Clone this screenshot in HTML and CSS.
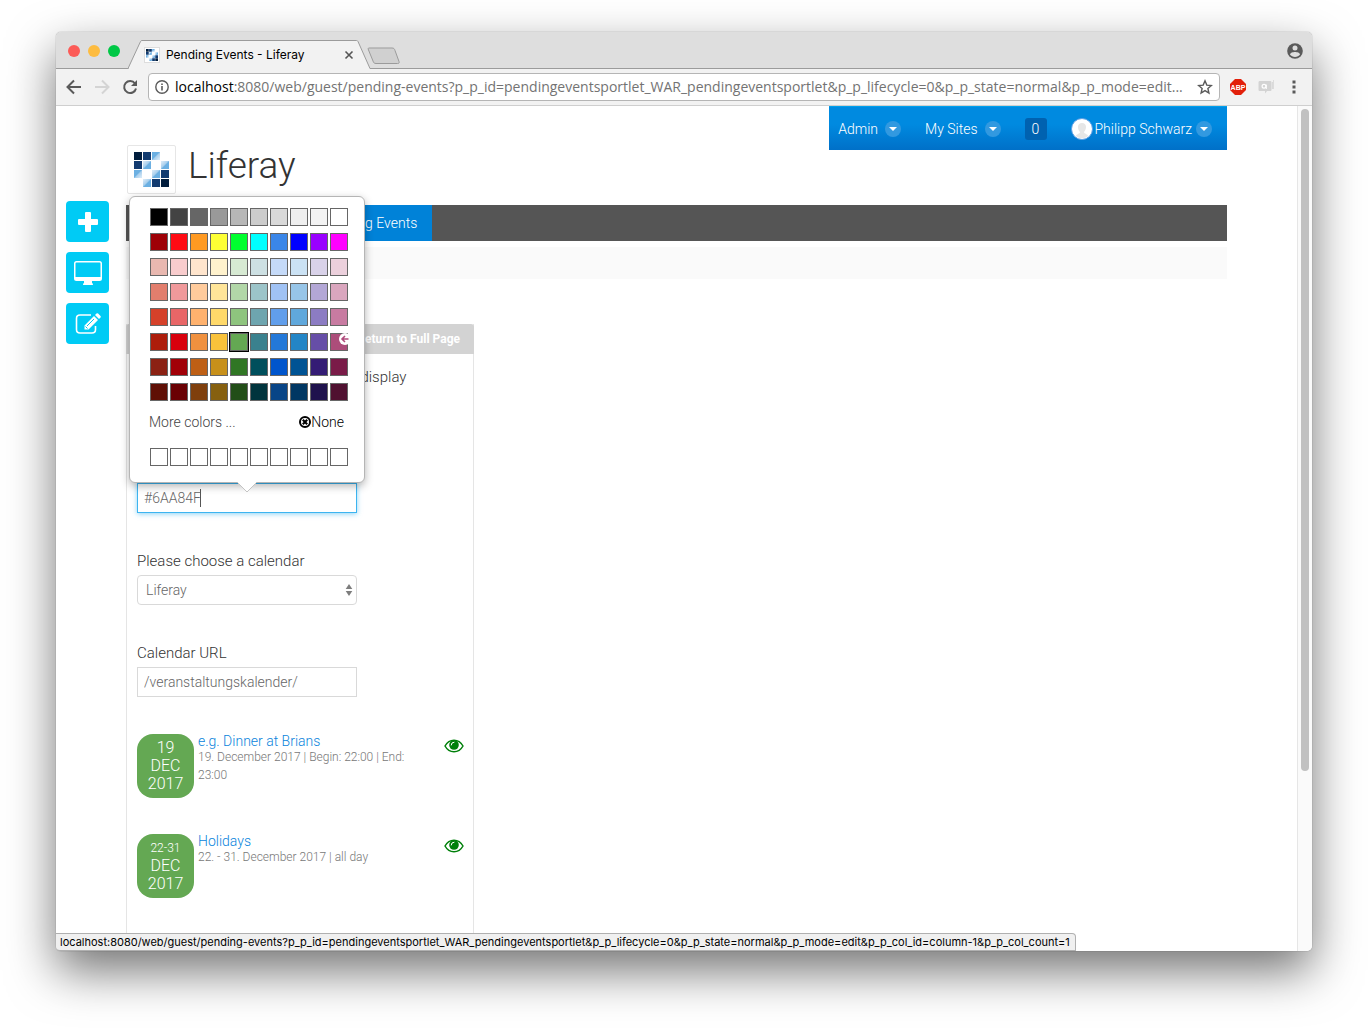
FILE: index.html
```html
<!DOCTYPE html>
<html lang="en">
<head>
<meta charset="utf-8">
<title>Pending Events - Liferay</title>
<link rel="stylesheet" href="styles.css">
</head>
<body>
<svg class="defs" aria-hidden="true">
  <defs>
    <linearGradient id="shine-start" x1="0" y1="0" x2="1" y2="1">
      <stop offset="0.1" stop-color="#d4e7f6"/><stop offset="0.48" stop-color="#a5cdec"/><stop offset="0.52" stop-color="#6cb0e2"/>
    </linearGradient>
    <linearGradient id="shine-end" x1="1" y1="1" x2="0" y2="0">
      <stop offset="0.1" stop-color="#d4e7f6"/><stop offset="0.48" stop-color="#a5cdec"/><stop offset="0.52" stop-color="#6cb0e2"/>
    </linearGradient>
    <symbol id="logo" viewBox="0 0 35 35">
      <path fill="#001d3d" d="M0 0h8v8H0zM27 27h8v8h-8z"/>
      <path fill="#123b70" d="M9 0h8v8H9zM0 9h8v8H0zM27 18h8v8h-8zM18 27h8v8h-8z"/>
      <rect x="18" width="8" height="8" fill="url(#shine-end)"/>
      <rect x="9" y="9" width="8" height="8" fill="url(#shine-start)"/>
      <rect x="27" y="9" width="8" height="8" fill="url(#shine-start)"/>
      <rect y="18" width="8" height="8" fill="url(#shine-end)"/>
      <rect x="18" y="18" width="8" height="8" fill="url(#shine-start)"/>
      <rect x="9" y="27" width="8" height="8" fill="url(#shine-start)"/>
    </symbol>
    <symbol id="eye" viewBox="0 0 20 14">
      <path fill="none" stroke="#00800a" stroke-width="1.5" d="M1 7C3 3.400 6.300 1.200 10 1.200S17 3.400 19 7C17 10.600 13.700 12.800 10 12.800S3 10.600 1 7z"/>
      <circle cx="10" cy="6" r="4.800" fill="#00800a"/>
      <path fill="none" stroke="#fff" stroke-width="1" stroke-linecap="round" d="M7.200 6A2.800 2.800 0 0 1 10 3.200"/>
    </symbol>
  </defs>
</svg>
<div class="window">
  <header class="tabstrip">
    <div class="lights">
      <button class="light light-close" aria-label="Close"></button>
      <button class="light light-min" aria-label="Minimize"></button>
      <button class="light light-max" aria-label="Zoom"></button>
    </div>
    <div class="tab">
      <svg class="tab-shape" viewBox="0 0 244 29" aria-hidden="true"><path fill="#f2f2f2" stroke="#9b9b9b" d="M0 28.500L12.500 1.500Q13 .5 14 .5H228.500Q229.500 .5 230 1.500L242 28.500"/><path stroke="#f2f2f2" d="M1 28.500H241.500"/></svg>
      <div class="tab-body">
        <span class="favicon"><svg width="12" height="12"><use href="#logo"/></svg></span>
        <span class="tab-title">Pending Events - Liferay</span>
        <button class="plain" aria-label="Close tab"><svg width="10" height="10" viewBox="0 0 10 10"><path stroke="#555" stroke-width="1.600" d="M1.500 1.500l7 7M8.500 1.500l-7 7"/></svg></button>
      </div>
    </div>
    <button class="plain new-tab" aria-label="New tab"><svg width="36" height="18" viewBox="0 0 36 18"><path fill="#d0d0d0" stroke="#9b9b9b" d="M3 1h23c2 0 2.500 1 3 2.500l4 11c.5 1.500 0 2-1.500 2H10c-2 0-2.500-1-3-2.500l-4.500-11C2 1.500 2 1 3 1z"/></svg></button>
    <button class="plain profile" aria-label="Profile"><svg width="16" height="16" viewBox="0 0 16 16"><circle cx="8" cy="8" r="7.800" fill="#5a5a5a"/><circle cx="8" cy="5" r="2.500" fill="#dedede"/><path fill="#dedede" d="M3 11.500C3 9.800 6 9 8 9s5 .8 5 2.500C12 13 10 14 8 14s-4-1-5-2.500z"/></svg></button>
  </header>
  <div class="toolbar">
    <button class="plain" aria-label="Back"><svg width="16" height="16" viewBox="0 0 16 16"><path fill="none" stroke="#5a5a5a" stroke-width="2" d="M15 8H2M8 1.500L1.500 8 8 14.500"/></svg></button>
    <button class="plain" aria-label="Forward"><svg width="16" height="16" viewBox="0 0 16 16"><path fill="none" stroke="#d4d4d4" stroke-width="2" d="M1 8h13M8 1.500L14.500 8 8 14.500"/></svg></button>
    <button class="plain" aria-label="Reload"><svg width="16" height="16" viewBox="0 0 16 16"><path fill="none" stroke="#5a5a5a" stroke-width="2" d="M13 4.500A6 6 0 1 0 14 9.500"/><path fill="#5a5a5a" d="M15 1v6H9z"/></svg></button>
    <div class="omnibox">
      <svg width="14" height="14" viewBox="0 0 14 14"><circle cx="7" cy="7" r="6.200" fill="none" stroke="#5a5a5a" stroke-width="1.400"/><path fill="#5a5a5a" d="M6.200 6h1.600v4.500H6.200zM6.200 3.400h1.600V5H6.200z"/></svg>
      <span class="url"><b>localhost</b>:8080/web/guest/pending-events?p_p_id=pendingeventsportlet_WAR_pendingeventsportlet&amp;p_p_lifecycle=0&amp;p_p_state=normal&amp;p_p_mode=edit...</span>
      <button class="plain" aria-label="Bookmark"><svg width="16" height="16" viewBox="0 0 16 16"><path fill="none" stroke="#5a5a5a" stroke-width="1.400" d="M8 1.800l1.800 4.300 4.600.4-3.500 3 1 4.500L8 11.600 4.100 14l1-4.500-3.500-3 4.600-.4z"/></svg></button>
    </div>
    <button class="plain" aria-label="Adblock Plus"><svg width="16" height="16" viewBox="0 0 16 16"><path fill="#e2200b" d="M5 0h6l5 5v6l-5 5H5l-5-5V5z"/><text x="8" y="11" text-anchor="middle" class="abp-text">ABP</text></svg></button>
    <button class="plain" aria-label="Extension"><svg width="16" height="14" viewBox="0 0 16 14"><path fill="#d3d3d3" d="M2 1h10c1 0 1.500.5 1.500 1.500v7c0 1-.5 1.500-1.500 1.500H9l-2 2.500V11H2C1 11 .5 10.500.5 9.500v-7C.5 1.500 1 1 2 1zM14 2h.8v7H14zM15.300 0h.7v9h-.7z"/><circle cx="6" cy="6.300" r="1.900" fill="none" stroke="#fff" stroke-width="1.200"/><path stroke="#fff" d="M8.300 4.500v4.500"/></svg></button>
    <button class="plain menu" aria-label="Menu"><svg width="4" height="14" viewBox="0 0 4 14"><path fill="#5a5a5a" d="M.5.500h3v3h-3zM.5 5.500h3v3h-3zM.5 10.500h3v3h-3z"/></svg></button>
  </div>
  <div class="viewport">
    <aside class="rail">
      <button class="rail-btn" aria-label="Add"><svg width="20" height="20" viewBox="0 0 20 20"><path fill="#fff" d="M8 0h4q1 0 1 1v6h6q1 0 1 1v4q0 1-1 1h-6v6q0 1-1 1H8q-1 0-1-1v-6H1q-1 0-1-1V8q0-1 1-1h6V1q0-1 1-1z"/></svg></button>
      <button class="rail-btn" aria-label="Preview"><svg width="28" height="24" viewBox="0 0 28 24"><path fill="#fff" fill-rule="evenodd" d="M2.500 0h23Q28 0 28 2.500v15q0 2.500-2.500 2.500H18v2q1 0 1 2H9q0-2 1-2v-2H2.500Q0 20 0 17.500v-15Q0 0 2.500 0zm0 1.500q-1 0-1 1V16h25V2.500q0-1-1-1z"/></svg></button>
      <button class="rail-btn" aria-label="Edit"><svg width="26" height="22" viewBox="0 0 26 22"><path fill="none" stroke="#fff" stroke-width="1.600" d="M16 2H5Q1.500 2 1.500 5.500v11Q1.500 20 5 20h12q3.500 0 3.500-3.500V13"/><path fill="#fff" d="M19 3l4 4-9.500 9.500H9.500v-4zM20 2l1.500-1.500q.8-.7 1.600 0L25.500 3q.7.800 0 1.600L24 6z"/><path stroke="#00cbf5" d="M12 13l7-7M10.500 13.500l2 2"/></svg></button>
    </aside>
    <main class="page">
      <nav class="dockbar" aria-label="Dockbar">
        <button class="dock-item">Admin <span class="caret"></span></button>
        <button class="dock-item dock-sites">My Sites <span class="caret"></span></button>
        <button class="dock-count">0</button>
        <button class="dock-item dock-user"><svg width="22" height="22" viewBox="0 0 22 22"><circle cx="11" cy="11" r="10.500" fill="#fff" stroke="#5e9fe4"/><path fill="#e6e6e6" d="M5 18c0-2 4-2 4-4-3-3-3-9 2-9s5 6 2 9c0 2 4 2 4 4-3 3-9 3-12 0z"/></svg>Philipp Schwarz <span class="caret"></span></button>
      </nav>
      <div class="banner">
        <a class="logo" href="#" aria-label="Home"><svg width="35" height="35"><use href="#logo"/></svg></a>
        <h1>Liferay</h1>
      </div>
      <nav class="navbar" aria-label="Site pages"><a class="nav-first" href="#">Welcome</a><a class="nav-active" href="#">Pending Events</a></nav>
      <div class="crumbs"></div>
      <section class="portlet">
        <div class="portlet-top">
          <a href="#"><svg class="back-icon" width="12" height="12" viewBox="0 0 12 12"><circle cx="6" cy="6" r="6" fill="#fff"/><path stroke="#b04a7b" stroke-width="1.600" fill="none" d="M9.500 6H3.500M6 3L3 6l3 3"/></svg>Return to Full Page</a>
        </div>
        <form class="portlet-form">
          <div class="field"><label for="count">Maximum number of meetings to display</label><input id="count" type="text" value="5"></div>
          <div class="field"><label for="color">Background color</label>
            <div class="color-anchor">
              <input id="color" class="focused" type="text" value="#6AA84F"><span class="cursor"></span>
              <div class="popover">
                <div class="palette" id="palette"></div>
                <div class="pop-actions"><a href="#">More colors ...</a><button type="button" class="none"><svg width="12" height="12" viewBox="0 0 12 12"><circle cx="6" cy="6" r="5" fill="none" stroke="#000" stroke-width="2"/><path stroke="#000" stroke-width="2.200" d="M3.800 3.800l4.400 4.400M8.200 3.800L3.800 8.200"/></svg>None</button></div>
                <div class="palette" id="recent"></div>
                <svg class="arrow" width="20" height="11" viewBox="0 0 20 11"><path fill="#fff" stroke="#c4c4c4" d="M0 0l10 10L20 0"/><path fill="#fff" d="M1 0h18v1H1z"/></svg>
              </div>
            </div>
          </div>
          <div class="field"><label for="calendar">Please choose a calendar</label>
            <div class="select-wrap"><select id="calendar"><option>Liferay</option></select><svg width="8" height="14" viewBox="0 0 8 14"><path fill="#7d7d7d" d="M4 1l3.300 5H.7zM4 13L.7 8h6.600z"/></svg></div>
          </div>
          <div class="field"><label for="url">Calendar URL</label><input id="url" type="text" value="/veranstaltungskalender/"></div>
        </form>
        <article class="event">
          <div class="badge"><span>19</span><span>DEC</span><span>2017</span></div>
          <div class="event-text"><a href="#">e.g. Dinner at Brians</a><p>19. December 2017 | Begin: 22:00 | End: 23:00</p></div>
          <svg class="eye" width="20" height="14"><use href="#eye"/></svg>
        </article>
        <article class="event">
          <div class="badge"><span class="range">22-31</span><span>DEC</span><span>2017</span></div>
          <div class="event-text"><a href="#">Holidays</a><p>22. - 31. December 2017 | all day</p></div>
          <svg class="eye" width="20" height="14"><use href="#eye"/></svg>
        </article>
      </section>
    </main>
    <div class="scrollbar"><div class="thumb"></div></div>
  </div>
  <div class="status">localhost:8080/web/guest/pending-events?p_p_id=pendingeventsportlet_WAR_pendingeventsportlet&amp;p_p_lifecycle=0&amp;p_p_state=normal&amp;p_p_mode=edit&amp;p_p_col_id=column-1&amp;p_p_col_count=1</div>
</div>
<script src="palette.js"></script>
</body>
</html>
```
FILE: styles.css
```css
* { box-sizing: border-box; }
body {
  margin: 0;
  padding: 32px 56px 80px;
  min-height: 100vh;
  display: flex;
  background: #fff;
  color: #333;
  font: 300 14px/20px Roboto, "Liberation Sans", sans-serif;
  overflow: hidden;
}
a { color: inherit; text-decoration: none; }
button, input, select { font: inherit; color: inherit; }
.defs { position: absolute; width: 0; height: 0; }
.plain { display: flex; padding: 0; border: 0; background: none; }
.window {
  position: relative;
  flex: 1;
  min-width: 0;
  display: flex;
  flex-direction: column;
  border-radius: 5px;
  background: #fff;
  box-shadow: 0 0 1px rgba(0, 0, 0, .6), 0 20px 48px rgba(0, 0, 0, .55);
}

/* Browser chrome */
.tabstrip {
  display: flex;
  align-items: flex-end;
  height: 37px;
  padding-left: 12px;
  background: #dedede;
  border-bottom: 1px solid #9b9b9b;
  border-radius: 5px 5px 0 0;
}
.lights { display: flex; gap: 8px; height: 34px; align-items: center; }
.light { width: 12px; height: 12px; padding: 0; border: 0; border-radius: 50%; }
.light-close { background: #fc5b57; }
.light-min { background: #fdbc40; }
.light-max { background: #00c846; }
.tab { display: grid; width: 244px; height: 29px; margin: 0 0 -1px 8px; }
.tab-shape, .tab-body { grid-area: 1 / 1; min-width: 0; }
.tab-body { display: flex; align-items: center; padding: 0 18px 0 16px; font: 400 12px/16px Inter, sans-serif; color: #000; }
.favicon { display: flex; padding: 1px; border: 1px solid #ddd; background: #fff; }
.tab-title { flex: 1; margin-left: 6px; }
.new-tab { margin: 0 auto 3px -6px; }
.profile { margin: 0 9px 9px 0; }
.toolbar {
  display: flex;
  align-items: center;
  gap: 12px;
  height: 37px;
  padding: 0 16px 0 10px;
  background: #f2f2f2;
  border-bottom: 1px solid #cfcfcf;
}
.omnibox {
  flex: 1;
  min-width: 0;
  display: flex;
  align-items: center;
  gap: 6px;
  height: 28px;
  margin: 0 -2px;
  padding: 0 6px;
  background: #fff;
  border: 1px solid #b5b5b5;
  border-radius: 4px;
}
.menu { margin-left: 6px; }
.url { flex: 1; min-width: 0; overflow: hidden; white-space: nowrap; font: 400 14px/20px "Open Sans", sans-serif; color: #737373; }
.url b { font-weight: 400; color: #000; }
.abp-text { font: 700 7px "Liberation Sans", sans-serif; fill: #fff; }

/* Page */
.viewport { flex: 1; display: grid; grid-template-columns: 70px 1fr 70px 15px; }
.rail { display: flex; flex-direction: column; gap: 10px; padding: 95px 17px 0 10px; }
.rail-btn { display: flex; align-items: center; justify-content: center; height: 41px; padding: 0; border: 0; border-radius: 4px; background: #00cbf5; }
.page { display: flex; flex-direction: column; min-width: 0; }
.dockbar {
  align-self: flex-end;
  display: flex;
  align-items: center;
  height: 44px;
  padding: 0 15px 0 9px;
  border-top: 1px solid #00a0ec;
  background: linear-gradient(#008ae0 40%, #0070c8);
  color: #fff;
}
.dock-item { display: flex; align-items: center; gap: 7px; padding: 0; border: 0; background: none; color: #fff; }
.dock-sites { margin-left: 24px; }
.dock-count { width: 22px; height: 22px; margin: 0 24px; padding: 0; border: 0; border-radius: 3px; background: #0062b0; color: #fff; }
.dock-user { gap: 2px; }
.dock-user .caret { margin-left: 2px; }
.caret { display: flex; align-items: center; justify-content: center; width: 16px; height: 16px; border-radius: 50%; background: #3299e0; }
.caret::after { content: ""; border: 4px solid transparent; border-top: 4px solid #fff; border-bottom: 0; }
.banner { display: flex; align-items: center; gap: 12px; height: 38px; margin-bottom: 17px; }
.logo { display: flex; margin-left: 1px; padding: 6px; border: 1px solid #e6e6e6; border-radius: 2px; }
h1 { margin: 0 0 6px; font-size: 37px; line-height: 40px; font-weight: 300; }
.navbar { display: flex; height: 36px; background: #555; color: #fff; line-height: 36px; }
.nav-first { width: 182px; padding-left: 15px; }
.nav-active { margin-right: auto; padding: 0 15px; background: #0082d8; }
.crumbs { height: 32px; margin-top: 6px; background: #fafafa; }
.portlet { flex: 1; width: 348px; margin-top: 45px; border: 1px solid #e5e5e5; border-width: 0 1px; }
.portlet-top { display: flex; justify-content: flex-end; height: 30px; margin: 0 -1px; padding-right: 14px; border-radius: 3px 3px 0 0; background: #d3d3d3; color: #fff; font-size: 12px; font-weight: 700; line-height: 30px; }
.portlet-top a { display: flex; align-items: center; gap: 6px; }
.back-icon { position: relative; z-index: 3; }
.portlet-form { display: flex; flex-direction: column; gap: 38px; padding: 13px 10px 0; }
.field { display: flex; flex-direction: column; align-items: flex-start; gap: 4px; }
.field label { font-size: 15px; }
.field input, .field select { display: block; width: 220px; height: 30px; padding: 0 6px; border: 1px solid #d9d9d9; border-radius: 0; background: #fff; color: #666; }
.field .focused { border-color: #3cb4f0; box-shadow: 0 1px 5px rgba(60, 180, 240, .6); outline: 0; }
.field select { padding: 0 8px; border-radius: 4px; appearance: none; }
.select-wrap { display: grid; align-items: center; }
.select-wrap > * { grid-area: 1 / 1; }
.select-wrap svg { justify-self: end; margin-right: 4px; pointer-events: none; }
.color-anchor { position: relative; }
.cursor { position: absolute; left: 63px; top: 6px; width: 1px; height: 18px; background: #555; }
.popover {
  position: absolute;
  left: -8px;
  bottom: 30px;
  z-index: 2;
  width: 236px;
  padding: 11px 16px 16px 20px;
  border: 1px solid #b5b5b5;
  border-radius: 6px;
  background: #fff;
  box-shadow: 0 3px 8px rgba(0, 0, 0, .3);
}
.palette { display: grid; grid-template-columns: repeat(10, 18px); gap: 7px 2px; }
.swatch { height: 18px; padding: 0; border: 1px solid #666; }
.swatch.selected { border-color: #666; outline: 1px solid #000; }
.pop-actions { display: flex; justify-content: space-between; margin: 11px 4px 16px -1px; color: #444; }
.none { display: flex; align-items: center; padding: 0; border: 0; background: none; color: #000; }
.arrow { position: absolute; left: 107px; top: 100%; }
.event { display: flex; height: 64px; margin: 36px 9px 0 10px; }
.portlet-form + .event { margin-top: 37px; }
.badge { display: flex; flex-direction: column; align-items: center; width: 57px; padding-top: 5px; border-radius: 16px; background: #64a853; color: #fff; font-size: 16px; line-height: 18px; }
.badge .range { font-size: 12px; }
.event-text { flex: 1; margin-left: 4px; margin-right: 34px; }
.event-text a { display: block; line-height: 14px; color: #0a84dc; }
.event-text p { margin: 0; font-size: 12px; line-height: 18px; color: #777; }
.eye { margin-top: 5px; }
.scrollbar { grid-column: 4; padding: 3px 3px 0; border-left: 1px solid #e6e6e6; background: #fafafa; border-radius: 0 0 5px; }
.thumb { height: 662px; border-radius: 4px; background: #c1c1c1; width: 8px; }
.status { position: absolute; left: 0; bottom: 0; height: 18px; padding: 0 5px 0 4px; border: 1px solid #b0b0b0; border-left: 0; border-radius: 0 4px 0 4px; background: #f0f0f0; color: #000; font: 400 11px/16px Inter, sans-serif; white-space: nowrap; }
```
FILE: palette.js
```js
const rows = [
  "000000 434343 666666 999999 b7b7b7 cccccc d9d9d9 efefef f3f3f3 ffffff",
  "9e0006 ff0b13 ff9a22 fdff35 00ff2f 00ffff 3a86e8 0000ff 9900ff ff00ff",
  "e9b8b0 f8cccd ffe5cd fff2cd d7ead3 cde0e3 c5daf8 cbe2f4 d9d2e9 ecd0dc",
  "e27e6d f0999b ffcb9c ffe599 b2d7a8 9cc4c9 a0c2f4 97c5e8 b3a7d6 daa6be",
  "d5412a e86667 ffb26e ffd96a 8ec47e 6ea5af 619eeb 60a8dc 8c7cc3 c87ba1",
  "ad1d0b d8000c f0913f f9c23b 64a853 3a818e 2378d8 2385c6 664ea7 ac4d7a",
  "8b2113 a10007 be5f15 c7901a 307624 004f5c 0055cc 005394 341c75 7a1b48",
  "5f0f05 6a0003 7f3f0c 86600f 224e18 00343d 084587 003763 1f124d 501130"
];
function addSwatch(parent, color) {
  const button = document.createElement("button");
  button.type = "button";
  button.className = color === "64a853" ? "swatch selected" : "swatch";
  button.style.backgroundColor = "#" + color;
  button.setAttribute("aria-label", "#" + color);
  parent.append(button);
}
const palette = document.getElementById("palette");
rows.join(" ").split(" ").forEach(color => addSwatch(palette, color));
const recent = document.getElementById("recent");
for (let i = 0; i < 10; i++) addSwatch(recent, "ffffff");
```
